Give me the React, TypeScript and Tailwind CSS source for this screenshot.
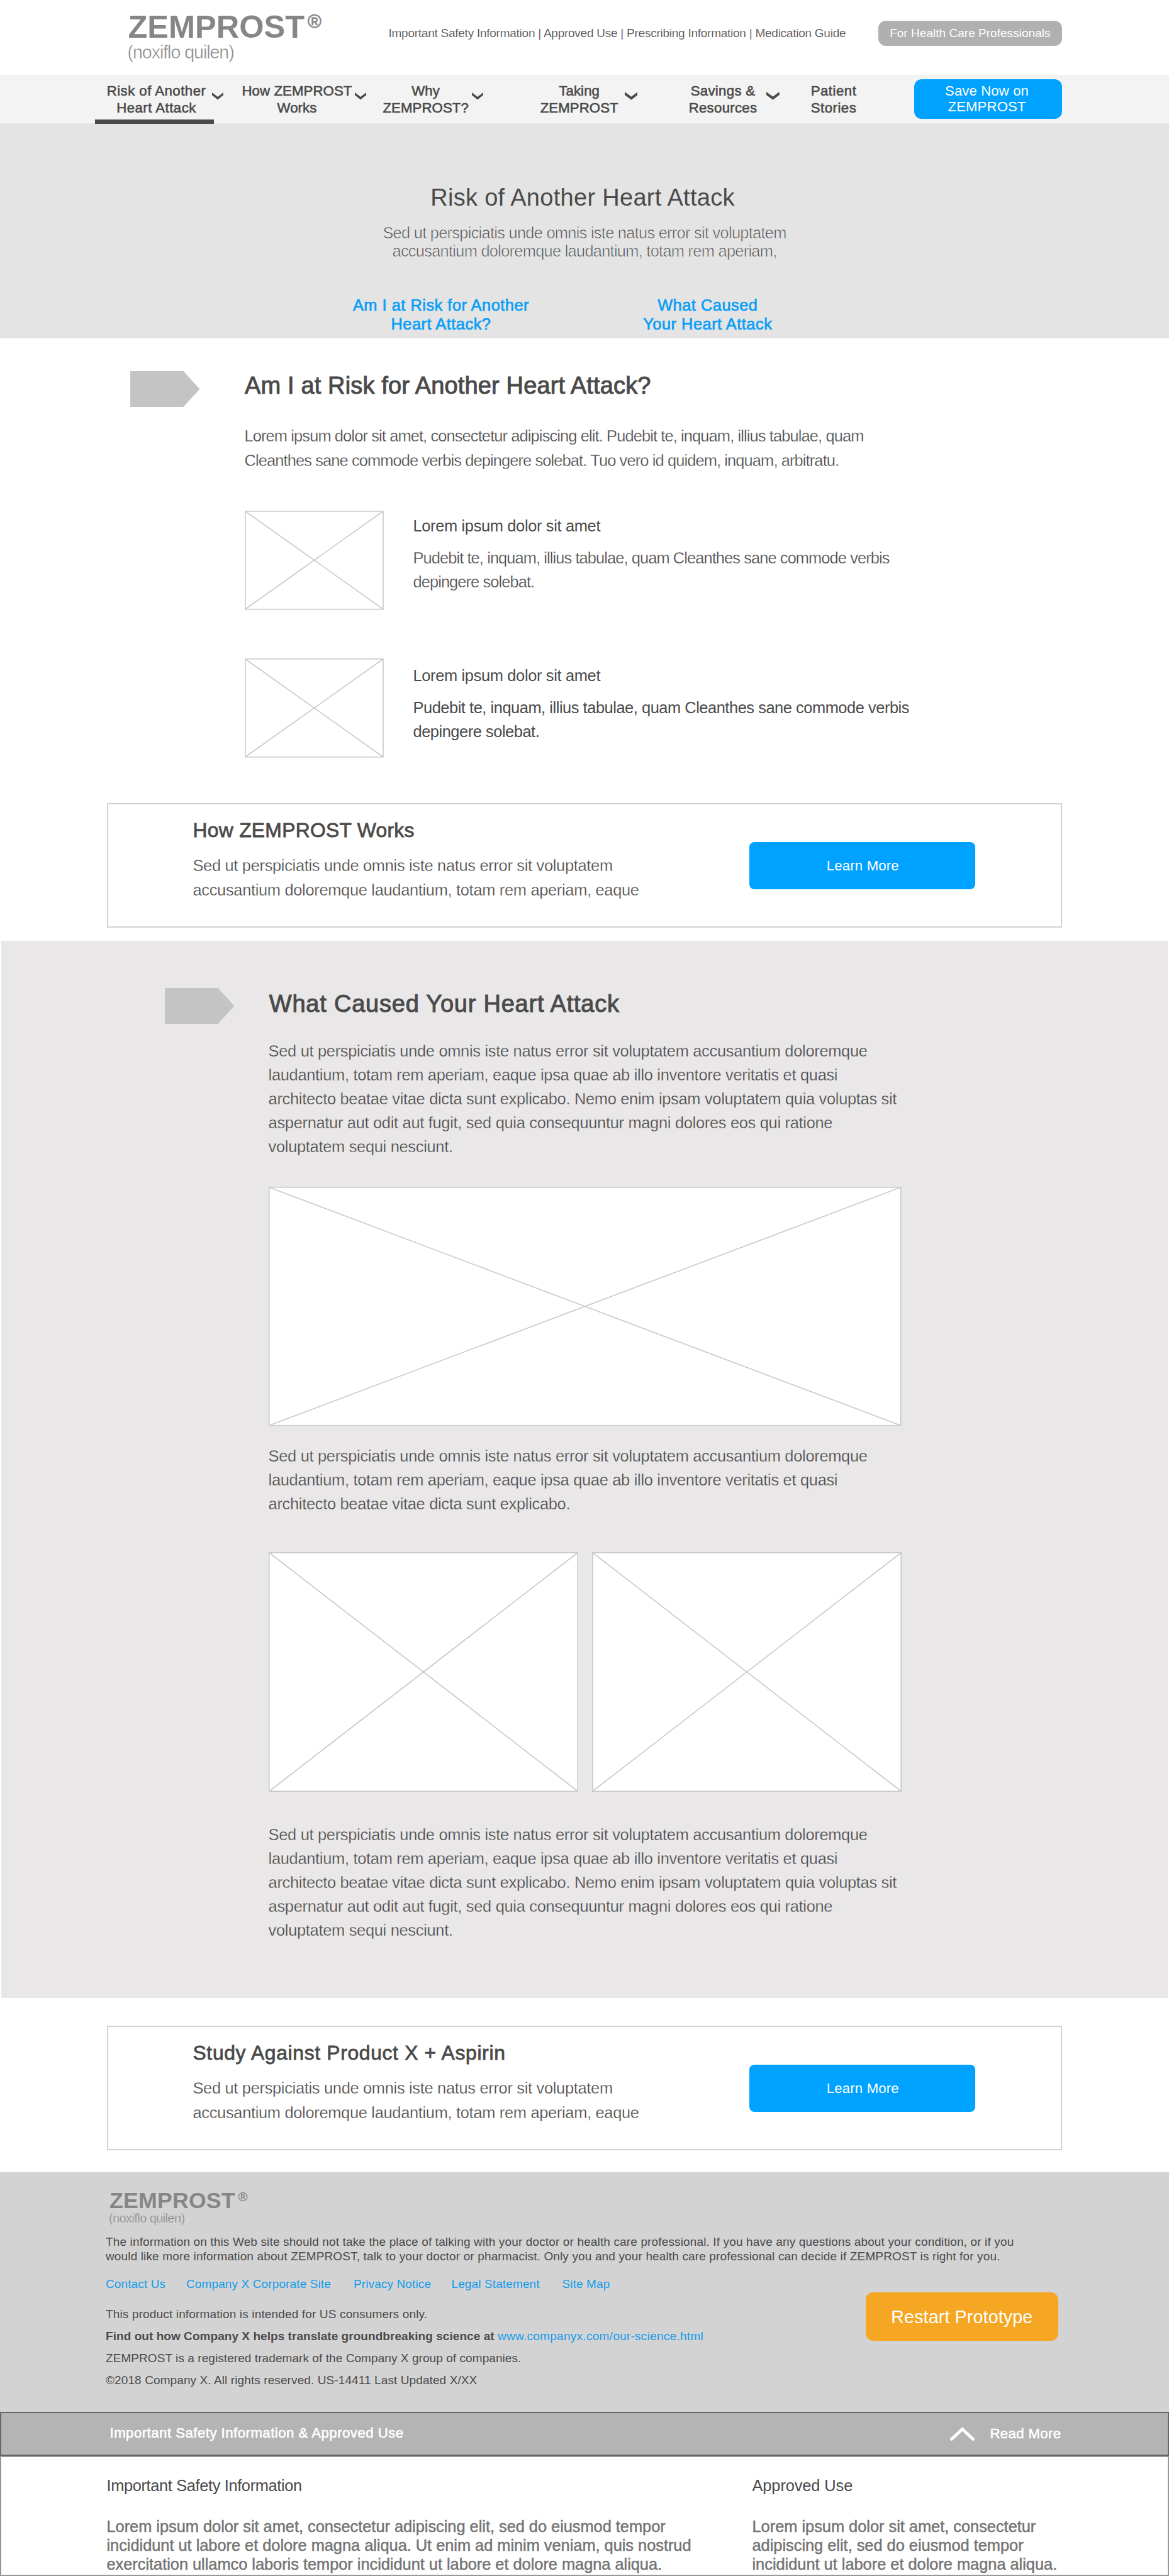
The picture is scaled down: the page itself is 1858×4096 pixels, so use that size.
import type { ReactNode } from "react";

const medium22 = "text-[22.2px] [-webkit-text-stroke:0.6px_currentColor]";
const medium38 = "text-[38px] leading-[44px] [-webkit-text-stroke:1px_currentColor]";
const lightOnWhite = "text-[25.4px] [-webkit-text-stroke:0.3px_#ffffff]";
const lightOnGray = "text-[25.4px] [-webkit-text-stroke:0.3px_#e9e7e8]";

const navItems = [
  { lines: ["Risk of Another", "Heart Attack"], box: "w-[176px] ml-[160.5px]", track: "tracking-[0.48px]", chevron: "small", active: true },
  { lines: ["How ZEMPROST", "Works"], box: "w-[183.6px] ml-[25.7px]", track: "tracking-[0.1px]", chevron: "small" },
  { lines: ["Why", "ZEMPROST?"], box: "w-[145.8px] ml-[22px]", track: "tracking-[0.1px]", chevron: "small" },
  { lines: ["Taking", "ZEMPROST"], box: "w-[144.2px] ml-[81px]", track: "tracking-[0.1px]", chevron: "large" },
  { lines: ["Savings &", "Resources"], box: "w-[138px] ml-[66.6px]", track: "tracking-[0.3px]", chevron: "large" },
  { lines: ["Patient", "Stories"], box: "w-[80px] ml-[46.3px]", track: "tracking-[0.5px]", chevron: "" },
];

function Chevron({ size }: { size: string }) {
  return (
    <svg
      viewBox="0 0 18 11"
      preserveAspectRatio="none"
      className={size === "small" ? "mt-[28.4px] h-[11.4px] w-[18px] shrink-0" : "mt-[27.2px] h-[12.8px] w-[20.7px] shrink-0"}
    >
      <polygon points="0,0 9,6.7 18,0 18,4.2 9,11 0,4.2" fill="#4a4a4a" />
    </svg>
  );
}

function SectionArrow({ className }: { className: string }) {
  return (
    <svg viewBox="0 0 110.5 57" className={`h-[57px] w-[110.5px] shrink-0 ${className}`}>
      <polygon points="0,0 84.5,0 110.5,28.5 84.5,57 0,57" fill="#c4c4c4" />
    </svg>
  );
}

function Placeholder({ w, h, className }: { w: number; h: number; className: string }) {
  return (
    <svg viewBox={`0 0 ${w} ${h}`} className={`shrink-0 ${className}`} fill="none" stroke="#c9c9c9" strokeWidth="1.6">
      <rect x="0.8" y="0.8" width={w - 1.6} height={h - 1.6} fill="#ffffff" />
      <path d={`M1 1L${w - 1} ${h - 1}M${w - 1} 1L1 ${h - 1}`} />
    </svg>
  );
}

function PromoCard({ title, track, className }: { title: string; track: string; className: string }) {
  return (
    <div className={`ml-[170.3px] flex h-[198px] w-[1518px] border-2 border-[#d2d2d2] bg-white ${className}`}>
      <div className="w-[885.5px] shrink-0 pt-[22.2px] pl-[134.2px]">
        <h3 className={`text-[31.8px] leading-[38px] [-webkit-text-stroke:0.8px_currentColor] ${track}`}>{title}</h3>
        <p className={`mt-[17.3px] leading-[39px] tracking-[-0.3px] ${lightOnWhite}`}>
          Sed ut perspiciatis unde omnis iste natus error sit voluptatem
          <br />
          accusantium doloremque laudantium, totam rem aperiam, eaque
        </p>
      </div>
      <button className="mt-[59.9px] ml-[133.2px] flex h-[74.7px] w-[358.7px] items-center justify-center rounded-[8px] bg-[#00a2ff] pt-[2px] pl-[2px] text-[22.2px] leading-[26px] tracking-[0.15px] text-white">
        Learn More
      </button>
    </div>
  );
}

function BodyCopy({ className, children }: { className: string; children: ReactNode }) {
  return <p className={`-ml-[0.7px] leading-[38.1px] tracking-[-0.29px] ${lightOnGray} ${className}`}>{children}</p>;
}

function FullCopy({ className }: { className: string }) {
  return (
    <BodyCopy className={className}>
      Sed ut perspiciatis unde omnis iste natus error sit voluptatem accusantium doloremque
      <br />
      laudantium, totam rem aperiam, eaque ipsa quae ab illo inventore veritatis et quasi
      <br />
      architecto beatae vitae dicta sunt explicabo. Nemo enim ipsam voluptatem quia voluptas sit
      <br />
      aspernatur aut odit aut fugit, sed quia consequuntur magni dolores eos qui ratione
      <br />
      voluptatem sequi nesciunt.
    </BodyCopy>
  );
}

export default function App() {
  return (
    <div className="h-[4096px] w-[1858px] overflow-hidden bg-white font-['Liberation_Sans',Arial,sans-serif] whitespace-nowrap text-[#4a4a4a]">
      <header className="flex h-[119px] items-start">
        <div className="ml-[203.5px] w-[414px] shrink-0 pt-[17.8px] text-[#868686]">
          <div className="flex">
            <span className="text-[50.5px] leading-[50px] font-bold">ZEMPROST</span>
            <span className="mt-[1.6px] ml-[5px] text-[29.5px] leading-[29px] [-webkit-text-stroke:0.8px_currentColor]">®</span>
          </div>
          <div className="-ml-px text-[28.6px] leading-[30px] tracking-[-1.05px] [-webkit-text-stroke:0.5px_#ffffff]">(noxiflo quilen)</div>
        </div>
        <div className="mt-[41.3px] w-[778.2px] shrink-0 text-[19px] leading-[24px] tracking-[-0.25px] [-webkit-text-stroke:0.2px_#ffffff]">
          Important Safety Information | Approved Use | Prescribing Information | Medication Guide
        </div>
        <button className="mt-[32.5px] flex h-[40.5px] w-[292.3px] items-center justify-center rounded-[12px] bg-[#b0b0b0] pt-px text-[19px] leading-[24px] tracking-[0.03px] text-white">
          For Health Care Professionals
        </button>
      </header>

      <nav className="flex h-[76.5px] items-start bg-[#f3f3f3]">
        {navItems.map((item) => (
          <div key={item.lines[1]} className="relative flex items-start">
            <div className={`pt-[12.4px] text-center leading-[27px] ${medium22} ${item.box} ${item.track}`}>
              {item.lines[0]}
              <br />
              {item.lines[1]}
            </div>
            {item.chevron && <Chevron size={item.chevron} />}
            {item.active && <span className="absolute top-[71.3px] left-[151px] h-[6.5px] w-[189px] bg-[#4a4a4a]" />}
          </div>
        ))}
        <button className="mt-[6.5px] ml-[88px] h-[63.5px] w-[235px] rounded-[12px] bg-[#00a2ff] pr-[4px] text-[22.2px] leading-[25.3px] tracking-[0.1px] text-white">
          Save Now on
          <br />
          ZEMPROST
        </button>
      </nav>

      <section className="h-[342.5px] bg-[#e4e4e4] pt-[96.5px] text-center">
        <h1 className="pr-[6px] text-[38px] leading-[44px] tracking-[0.3px]">Risk of Another Heart Attack</h1>
        <p className="mt-[20.4px] text-[25.4px] leading-[28.6px] tracking-[-0.72px] [-webkit-text-stroke:0.7px_#e4e4e4]">
          Sed ut perspiciatis unde omnis iste natus error sit voluptatem
          <br />
          accusantium doloremque laudantium, totam rem aperiam,
        </p>
        <div className="mt-[56.3px] ml-[551px] flex gap-[123.8px] text-[25.4px] leading-[30px] tracking-[0.5px] text-[#0a9ef6] [-webkit-text-stroke:0.7px_currentColor]">
          <a className="w-[300px]">
            Am I at Risk for Another
            <br />
            Heart Attack?
          </a>
          <a className="w-[300px]">
            What Caused
            <br />
            Your Heart Attack
          </a>
        </div>
      </section>

      <section className="flex pt-[51.8px]">
        <SectionArrow className="ml-[206.5px]" />
        <div className="ml-[71.5px]">
          <h2 className={`mt-[1.1px] ml-[0.5px] tracking-[0.15px] ${medium38}`}>Am I at Risk for Another Heart Attack?</h2>
          <p className={`mt-[39.5px] leading-[38.3px] tracking-[-0.87px] ${lightOnWhite}`}>
            Lorem ipsum dolor sit amet, consectetur adipiscing elit. Pudebit te, inquam, illius tabulae, quam
            <br />
            Cleanthes sane commode verbis depingere solebat. Tuo vero id quidem, inquam, arbitratu.
          </p>
          <div className="mt-[61.1px] flex">
            <Placeholder w={220.8} h={157.5} className="ml-[0.5px] h-[157.5px] w-[220.8px]" />
            <div className="ml-[46.7px] pt-[5px] text-[25.4px] leading-[38.1px]">
              <h4 className="tracking-[-0.33px]">Lorem ipsum dolor sit amet</h4>
              <p className={`mt-[12.4px] tracking-[-0.9px] ${lightOnWhite}`}>
                Pudebit te, inquam, illius tabulae, quam Cleanthes sane commode verbis
                <br />
                depingere solebat.
              </p>
            </div>
          </div>
          <div className="mt-[77.5px] flex">
            <Placeholder w={220.8} h={157.5} className="ml-[0.5px] h-[157.5px] w-[220.8px]" />
            <div className="ml-[46.7px] pt-[8.2px] text-[25.4px] leading-[38.1px]">
              <h4 className="tracking-[-0.33px]">Lorem ipsum dolor sit amet</h4>
              <p className="mt-[12.4px] tracking-[-0.45px]">
                Pudebit te, inquam, illius tabulae, quam Cleanthes sane commode verbis
                <br />
                depingere solebat.
              </p>
            </div>
          </div>
        </div>
      </section>

      <PromoCard title="How ZEMPROST Works" track="tracking-[0.3px]" className="mt-[72.5px] mb-[21px]" />

      <section className="mx-[1.6px] flex h-[1680.5px] bg-[#e9e7e8] pt-[74.6px]">
        <SectionArrow className="ml-[260.2px]" />
        <div className="ml-[55px] w-[1005.5px]">
          <h2 className={`mt-[3.1px] ml-[0.5px] tracking-[0.78px] ${medium38}`}>What Caused Your Heart Attack</h2>
          <FullCopy className="mt-[34.3px]" />
          <Placeholder w={1005.5} h={380.5} className="mt-[44.1px] h-[380.5px] w-[1005.5px]" />
          <BodyCopy className="mt-[29px]">
            Sed ut perspiciatis unde omnis iste natus error sit voluptatem accusantium doloremque
            <br />
            laudantium, totam rem aperiam, eaque ipsa quae ab illo inventore veritatis et quasi
            <br />
            architecto beatae vitae dicta sunt explicabo.
          </BodyCopy>
          <div className="mt-[57.3px] flex justify-between">
            <Placeholder w={492} h={381} className="h-[381px] w-[492px]" />
            <Placeholder w={492} h={381} className="h-[381px] w-[492px]" />
          </div>
          <FullCopy className="mt-[49.3px]" />
        </div>
      </section>

      <PromoCard title="Study Against Product X + Aspirin" track="tracking-[0.68px]" className="mt-[44.5px] mb-[35px]" />

      <footer className="h-[381px] bg-[#d3d3d3] pt-[27px] pl-[168px] text-[19px] leading-[22px]">
        <div className="ml-[6px] text-[#868686]">
          <div className="flex">
            <span className="text-[35.7px] leading-[36px] font-bold tracking-[0.2px]">ZEMPROST</span>
            <span className="mt-[1.3px] ml-[4.5px] text-[20.5px] leading-[21px] [-webkit-text-stroke:0.3px_currentColor]">®</span>
          </div>
          <div className="-ml-px text-[20px] leading-[20px] tracking-[-0.6px] [-webkit-text-stroke:0.4px_#d3d3d3]">(noxiflo quilen)</div>
        </div>
        <p className="mt-[17.4px] leading-[22.2px] tracking-[0.14px]">
          The information on this Web site should not take the place of talking with your doctor or health care professional. If you have any questions about your condition, or if you
          <br />
          would like more information about ZEMPROST, talk to your doctor or pharmacist. Only you and your health care professional can decide if ZEMPROST is right for you.
        </p>
        <div className="flex items-start">
          <div className="w-[1207.7px]">
            <div className="mt-[22.3px] flex tracking-[0.12px] text-[#149cec]">
              <a className="w-[128px]">Contact Us</a>
              <a className="w-[266px]">Company X Corporate Site</a>
              <a className="w-[155.5px]">Privacy Notice</a>
              <a className="w-[176px]">Legal Statement</a>
              <a>Site Map</a>
            </div>
            <p className="mt-[25.4px] tracking-[0.15px]">This product information is intended for US consumers only.</p>
            <p className="mt-[13px]">
              <b className="tracking-[0.05px]">Find out how Company X helps translate groundbreaking science at </b>
              <a className="tracking-[0.28px] text-[#149cec]">www.companyx.com/our-science.html</a>
            </p>
            <p className="mt-[13px] tracking-[0.07px]">ZEMPROST is a registered trademark of the Company X group of companies.</p>
            <p className="mt-[13px] tracking-[0.1px]">©2018 Company X. All rights reserved. US-14411 Last Updated X/XX</p>
          </div>
          <button className="mt-[45.9px] h-[77.7px] w-[306.3px] rounded-[12px] bg-[#f5a623] text-[28.6px] leading-[32px] tracking-[0.15px] text-white">
            Restart Prototype
          </button>
        </div>
      </footer>

      <div className={`flex h-[70px] items-center border-2 border-[#666566] bg-[#b4b4b4] pb-[3px] pl-[172.5px] leading-[26px] text-white ${medium22}`}>
        <span className="w-[1335.5px] tracking-[0.48px]">Important Safety Information &amp; Approved Use</span>
        <svg viewBox="0 0 39 22" className="mt-[2px] h-[22px] w-[39px]" fill="none" stroke="#ffffff" strokeWidth="4.8" strokeLinecap="round">
          <path d="M2.4 19.4L19.5 3.4L36.6 19.4" strokeLinejoin="miter" />
        </svg>
        <span className="mt-[3px] ml-[24.5px] tracking-[0.35px]">Read More</span>
      </div>

      <div className="flex h-[191px] border-2 border-[#979797] bg-white pt-[30px] pl-[167.5px] text-[25.4px] leading-[30.2px]">
        <div className="w-[1026px]">
          <h5 className="leading-[30px] tracking-[-0.36px]">Important Safety Information</h5>
          <p className="mt-[34.9px] tracking-[-0.03px] text-[#747474] [-webkit-text-stroke:0.5px_currentColor]">
            Lorem ipsum dolor sit amet, consectetur adipiscing elit, sed do eiusmod tempor
            <br />
            incididunt ut labore et dolore magna aliqua. Ut enim ad minim veniam, quis nostrud
            <br />
            exercitation ullamco laboris tempor incididunt ut labore et dolore magna aliqua.
          </p>
        </div>
        <div>
          <h5 className="leading-[30px] tracking-[-0.1px]">Approved Use</h5>
          <p className="mt-[34.9px] tracking-[-0.02px] text-[#747474] [-webkit-text-stroke:0.5px_currentColor]">
            Lorem ipsum dolor sit amet, consectetur
            <br />
            adipiscing elit, sed do eiusmod tempor
            <br />
            incididunt ut labore et dolore magna aliqua.
          </p>
        </div>
      </div>
    </div>
  );
}
